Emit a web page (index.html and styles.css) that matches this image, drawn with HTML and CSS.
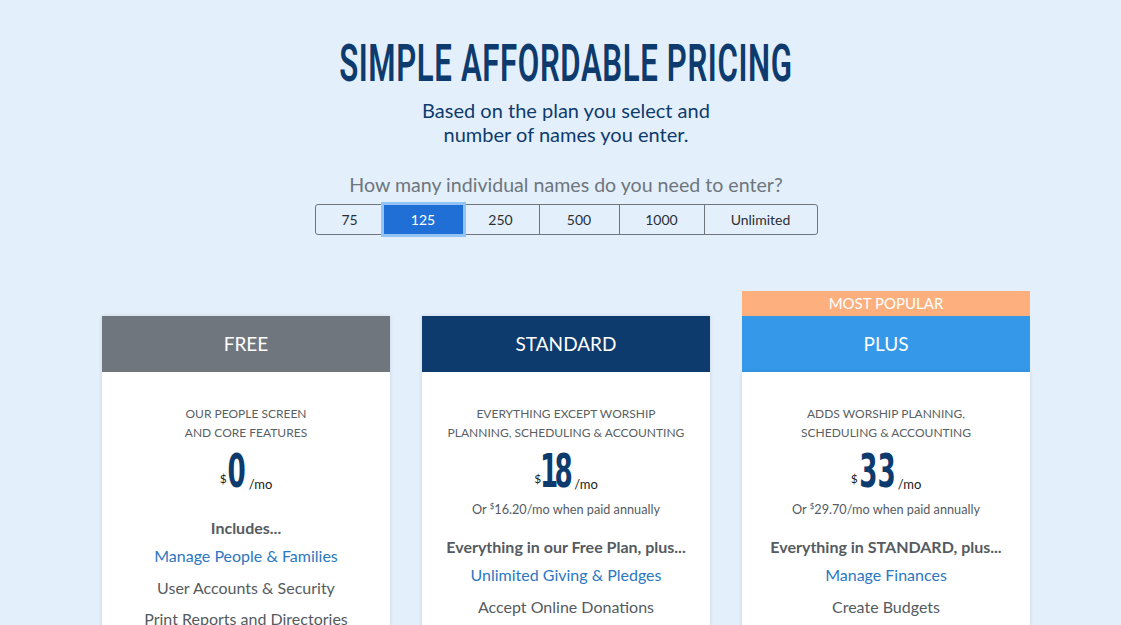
FILE: index.html
```html
<!DOCTYPE html>
<html>
<head>
<meta charset="utf-8">
<link rel="stylesheet" href="styles.css">
</head>
<body>
<div class="page">
  <h1 class="title"><span class="squeeze">SIMPLE AFFORDABLE PRICING</span></h1>
  <p class="subtitle">Based on the plan you select and<br>number of names you enter.</p>
  <p class="question">How many individual names do you need to enter?</p>
  <div class="selector">
    <button class="opt w75">75</button>
    <button class="opt w125 active">125</button>
    <button class="opt w250">250</button>
    <button class="opt w500">500</button>
    <button class="opt w1000">1000</button>
    <button class="opt wunl">Unlimited</button>
  </div>
  <div class="cards">
    <div class="card">
      <div class="card-head free">FREE</div>
      <div class="card-body">
        <p class="desc">OUR PEOPLE SCREEN<br>AND CORE FEATURES</p>
        <div class="price"><span class="cur">$</span><span class="amt d1"><span class="num">0</span></span><span class="per">/mo</span></div>
        <p class="lead lead-free">Includes...</p>
        <p class="feat link">Manage People &amp; Families</p>
        <p class="feat">User Accounts &amp; Security</p>
        <p class="feat">Print Reports and Directories</p>
      </div>
    </div>
    <div class="card">
      <div class="card-head standard">STANDARD</div>
      <div class="card-body">
        <p class="desc">EVERYTHING EXCEPT WORSHIP<br>PLANNING, SCHEDULING &amp; ACCOUNTING</p>
        <div class="price"><span class="cur">$</span><span class="amt d18"><span class="num">18</span></span><span class="per">/mo</span></div>
        <p class="annual">Or <sup>$</sup>16.20/mo when paid annually</p>
        <p class="lead">Everything in our Free Plan, plus...</p>
        <p class="feat link">Unlimited Giving &amp; Pledges</p>
        <p class="feat">Accept Online Donations</p>
      </div>
    </div>
    <div class="card popular">
      <div class="badge">MOST POPULAR</div>
      <div class="card-head plus">PLUS</div>
      <div class="card-body">
        <p class="desc">ADDS WORSHIP PLANNING,<br>SCHEDULING &amp; ACCOUNTING</p>
        <div class="price"><span class="cur">$</span><span class="amt d2"><span class="num">33</span></span><span class="per">/mo</span></div>
        <p class="annual">Or <sup>$</sup>29.70/mo when paid annually</p>
        <p class="lead">Everything in STANDARD, plus...</p>
        <p class="feat link">Manage Finances</p>
        <p class="feat">Create Budgets</p>
      </div>
    </div>
  </div>
</div>
</body>
</html>
```
FILE: styles.css
```css
html, body {
  margin: 0;
  padding: 0;
  background: #e3f0fc;
  overflow: hidden;
}
body {
  font-family: Lato, "Open Sans", sans-serif;
  color: #555b61;
}
.page {
  display: flex;
  flex-direction: column;
  align-items: center;
  padding: 36px 0 0 11px;
}
.title {
  margin: 0;
  width: 600px;
  display: flex;
  justify-content: center;
  font-family: Roboto, "DejaVu Sans", sans-serif;
  font-weight: 600;
  font-size: 52px;
  line-height: 56px;
  color: #0e3b6e;
}
.squeeze {
  display: inline-block;
  white-space: nowrap;
  letter-spacing: 1px;
  transform: scaleX(0.6);
  flex: none;
}
.subtitle {
  margin: 6px 0 0;
  font-size: 20px;
  line-height: 24px;
  color: #0e3b6e;
  text-align: center;
}
.question {
  margin: 27px 0 0;
  font-size: 19.6px;
  line-height: 24px;
  color: #6e757c;
  font-weight: 400;
}
.selector {
  display: flex;
  margin-top: 7px;
  border: 1px solid #6e757c;
  border-radius: 3px;
  height: 29px;
}
.opt {
  font-family: Lato, sans-serif;
  font-size: 14px;
  color: #2a2f34;
  background: transparent;
  border: 0;
  border-left: 1px solid #6e757c;
  padding: 0;
  margin: 0;
  height: 29px;
}
.opt:first-child { border-left: 0; }
.w75 { width: 68px; }
.w125 { width: 79px; }
.w250 { width: 76px; }
.w500 { width: 80px; }
.w1000 { width: 85px; }
.wunl { width: 113px; }
.opt.active {
  background: #1f6fd6;
  color: #fff;
  border-left: 0;
  box-shadow: 0 0 0 3px #92c5f6;
  position: relative;
}
.active + .opt { border-left: 0; }
.cards {
  display: flex;
  gap: 32px;
  margin-top: 81px;
  align-items: flex-start;
}
.card {
  width: 288px;
  background: #fff;
  box-shadow: 0 0 4px rgba(0, 0, 0, 0.12);
}
.popular {
  margin-top: -25px;
  background: transparent;
  box-shadow: none;
}
.popular .card-body { box-shadow: 0 0 4px rgba(0, 0, 0, 0.12); }
.badge {
  height: 25px;
  line-height: 25px;
  background: #fdb07e;
  color: #fff;
  text-align: center;
  font-size: 15px;
}
.card-head {
  height: 56px;
  line-height: 56px;
  text-align: center;
  color: #fff;
  font-size: 19px;
}
.free { background: #6f767d; }
.standard { background: #0e3b6e; }
.plus { background: #3598e8; }
.card-body {
  background: #fff;
  text-align: center;
  padding: 32px 0 20px;
}
.desc {
  margin: 0;
  font-size: 12px;
  line-height: 19px;
  color: #5a5f64;
}
.price {
  display: flex;
  justify-content: center;
  align-items: flex-end;
  margin-top: 7px;
  height: 44px;
  color: #222;
}
.cur {
  font-size: 12px;
  align-self: flex-start;
  margin-top: 22px;
  margin-right: 1px;
}
.amt {
  display: flex;
  justify-content: center;
  font-family: "DejaVu Sans Condensed", "DejaVu Sans", sans-serif;
  font-stretch: condensed;
  font-weight: 700;
  font-size: 47px;
  line-height: 44px;
  color: #0e3b6e;
}
.d1 { width: 19px; }
.d2 { width: 37px; }
.d18 { width: 30px; }
.num {
  display: inline-block;
  flex: none;
  white-space: nowrap;
  transform: scaleX(0.62);
}
.d18 .num { letter-spacing: -6px; margin-left: -6px; }
.per {
  font-size: 13px;
  margin-bottom: 1px;
  margin-left: 2px;
}
.annual {
  margin: 7px 0 0;
  font-size: 12.7px;
  line-height: 18px;
  color: #555b61;
}
.annual sup { font-size: 8px; vertical-align: 5px; line-height: 0; }
.lead {
  margin: 17px 0 0;
  font-size: 16px;
  font-weight: 700;
  line-height: 24px;
  color: #555b61;
}
.lead-free { margin-top: 23px; }
.feat {
  margin: 7px 0 0;
  font-size: 16px;
  line-height: 24px;
  color: #555b61;
}
.feat.link { color: #2c77c1; margin-top: 4px; }
.feat.link + .feat { margin-top: 8px; }
```
